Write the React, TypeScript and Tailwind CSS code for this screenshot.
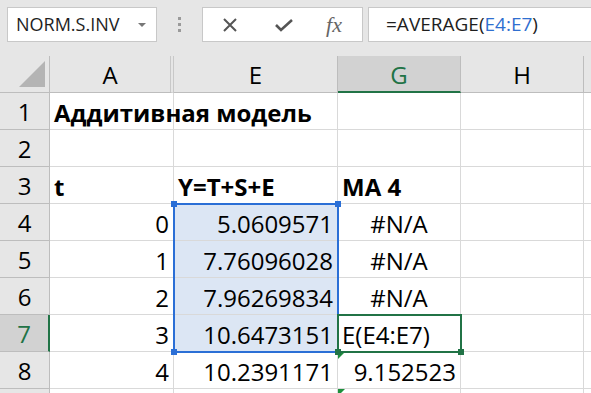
import React from 'react';

const cols = ['A', 'E', 'G', 'H', ''];

type Cell = { text?: string; bold?: boolean; align?: 'left' | 'right' | 'center'; sel?: boolean; err?: boolean };

const rows: Cell[][] = [
  [{ text: 'Аддитивная модель', bold: true }, {}, {}, {}, {}],
  [{}, {}, {}, {}, {}],
  [{ text: 't', bold: true }, { text: 'Y=T+S+E', bold: true }, { text: 'MA 4', bold: true }, {}, {}],
  [{ text: '0', align: 'right' }, { text: '5.0609571', align: 'right', sel: true }, { text: '#N/A', align: 'center' }, {}, {}],
  [{ text: '1', align: 'right' }, { text: '7.76096028', align: 'right', sel: true }, { text: '#N/A', align: 'center' }, {}, {}],
  [{ text: '2', align: 'right' }, { text: '7.96269834', align: 'right', sel: true }, { text: '#N/A', align: 'center' }, {}, {}],
  [{ text: '3', align: 'right' }, { text: '10.6473151', align: 'right', sel: true }, { text: 'E(E4:E7)' }, {}, {}],
  [{ text: '4', align: 'right' }, { text: '10.2391171', align: 'right' }, { text: '9.152523', align: 'right', err: true }, {}, {}],
  [{}, {}, { err: true }, {}, {}],
];

const App = () => {
  return (
    <div className="w-[591px] h-[393px] overflow-hidden bg-white text-black font-['Open_Sans','Noto_Sans',sans-serif]">
      {/* formula bar */}
      <div className="h-[56px] bg-[#e6e6e6] flex items-start pt-[7px] pl-[7px]">
        <div className="w-[150px] h-[35px] bg-white border border-[#c8c8c8] flex items-center pl-[8px] pr-[9px] justify-between">
          <span className="text-[18px] text-[#1e1e1e]">NORM.S.INV</span>
          <svg width="10" height="6" viewBox="0 0 10 6"><path d="M1 1 L5 5 L9 1 Z" fill="#777" /></svg>
        </div>
        <div className="w-[45px] h-[35px] flex items-center justify-center">
          <div className="flex flex-col gap-[3px]">
            <span className="w-[3px] h-[3px] bg-[#9a9a9a]" />
            <span className="w-[3px] h-[3px] bg-[#9a9a9a]" />
            <span className="w-[3px] h-[3px] bg-[#9a9a9a]" />
          </div>
        </div>
        <div className="w-[161px] h-[35px] bg-white border border-[#c8c8c8] flex items-center">
          <div className="w-[54px] flex justify-center">
            <svg width="16" height="16" viewBox="0 0 16 16"><path d="M2 2 L14 14 M14 2 L2 14" stroke="#555" strokeWidth="2" /></svg>
          </div>
          <div className="w-[54px] flex justify-center">
            <svg width="20" height="16" viewBox="0 0 20 16"><path d="M2 8 L7 13 L18 3" stroke="#555" strokeWidth="2.6" fill="none" /></svg>
          </div>
          <div className="w-[46px] flex justify-center">
            <span className="font-['Liberation_Serif',serif] italic text-[22px] text-[#666]">fx</span>
          </div>
        </div>
        <div className="ml-[5px] flex-1 h-[35px] bg-white border border-[#c8c8c8] border-r-0 flex items-center pl-[17px] text-[19px] text-[#1e1e1e]">
          <span>=AVERAGE(</span>
          <span className="text-[#2f6fd0]">E4:E7</span>
          <span>)</span>
        </div>
      </div>

      {/* sheet */}
      <div className="relative">
        <div className="grid grid-cols-[50px_124px_164px_123px_123px_1fr] auto-rows-[37px] text-[24px] leading-none">
          {/* header row */}
          <div className="bg-[#e6e6e6] border-r border-b border-[#bdbdbd] flex items-end justify-end pr-[4px] pb-[5px]">
            <svg width="26" height="26" viewBox="0 0 26 26"><path d="M26 0 L26 26 L0 26 Z" fill="#b4b4b4" /></svg>
          </div>
          {cols.map((c, i) => (
            <div
              key={i}
              className={
                c === 'G'
                  ? 'bg-[#d2d2d2] border-r border-[#bdbdbd] border-b-2 border-b-[#217346] flex items-center justify-center pt-[2px] text-[#217346]'
                  : c === 'A'
                  ? 'bg-[#e6e6e6] border-r-[4px] border-r-[#c8c8c8] border-double border-b border-b-[#bdbdbd] flex items-center justify-center pt-[2px]'
                  : 'bg-[#e6e6e6] border-r border-b border-[#bdbdbd] flex items-center justify-center pt-[2px]'
              }
            >
              {c}
            </div>
          ))}
          {rows.map((row, r) => (
            <React.Fragment key={r}>
              <div
                className={
                  r === 6
                    ? 'bg-[#d2d2d2] border-b border-[#bdbdbd] border-r-2 border-r-[#217346] flex items-center justify-center pt-[2px] text-[#217346]'
                    : 'bg-[#e6e6e6] border-r border-b border-[#bdbdbd] flex items-center justify-center pt-[2px]'
                }
              >
                {r < 8 ? r + 1 : ''}
              </div>
              {row.map((cell, ci) => (
                <div
                  key={ci}
                  className={`relative border-r border-b border-[#d9d9d9] flex items-center px-[4px] pt-[3px] whitespace-nowrap ${
                    cell.sel ? 'bg-[#dce6f4]' : 'bg-white'
                  } ${cell.align === 'right' ? 'justify-end' : cell.align === 'center' ? 'justify-center' : 'justify-start'} ${
                    cell.bold ? 'font-bold' : ''
                  } ${r === 0 && ci === 0 ? 'overflow-visible z-10' : ''}`}
                >
                  {cell.err && (
                    <span className="absolute left-0 top-0 w-0 h-0 border-t-[7px] border-t-[#1e8f3c] border-r-[7px] border-r-transparent" />
                  )}
                  {cell.text}
                </div>
              ))}
            </React.Fragment>
          ))}
        </div>

        {/* E4:E7 range highlight */}
        <div className="absolute left-[173px] top-[147px] w-[166px] h-[150px] border-2 border-[#2b6fd6] pointer-events-none" />
        <span className="absolute left-[171px] top-[145px] w-[6px] h-[6px] bg-[#2b6fd6]" />
        <span className="absolute left-[335px] top-[145px] w-[6px] h-[6px] bg-[#2b6fd6]" />
        <span className="absolute left-[171px] top-[293px] w-[6px] h-[6px] bg-[#2b6fd6]" />

        {/* active cell G7 */}
        <div className="absolute left-[337px] top-[258px] w-[125px] h-[39px] border-2 border-[#217346] pointer-events-none" />
        <span className="absolute left-[335px] top-[293px] w-[6px] h-[6px] bg-[#217346]" />
        <span className="absolute left-[458px] top-[293px] w-[6px] h-[6px] bg-[#217346]" />
      </div>
    </div>
  );
};

export default App;
